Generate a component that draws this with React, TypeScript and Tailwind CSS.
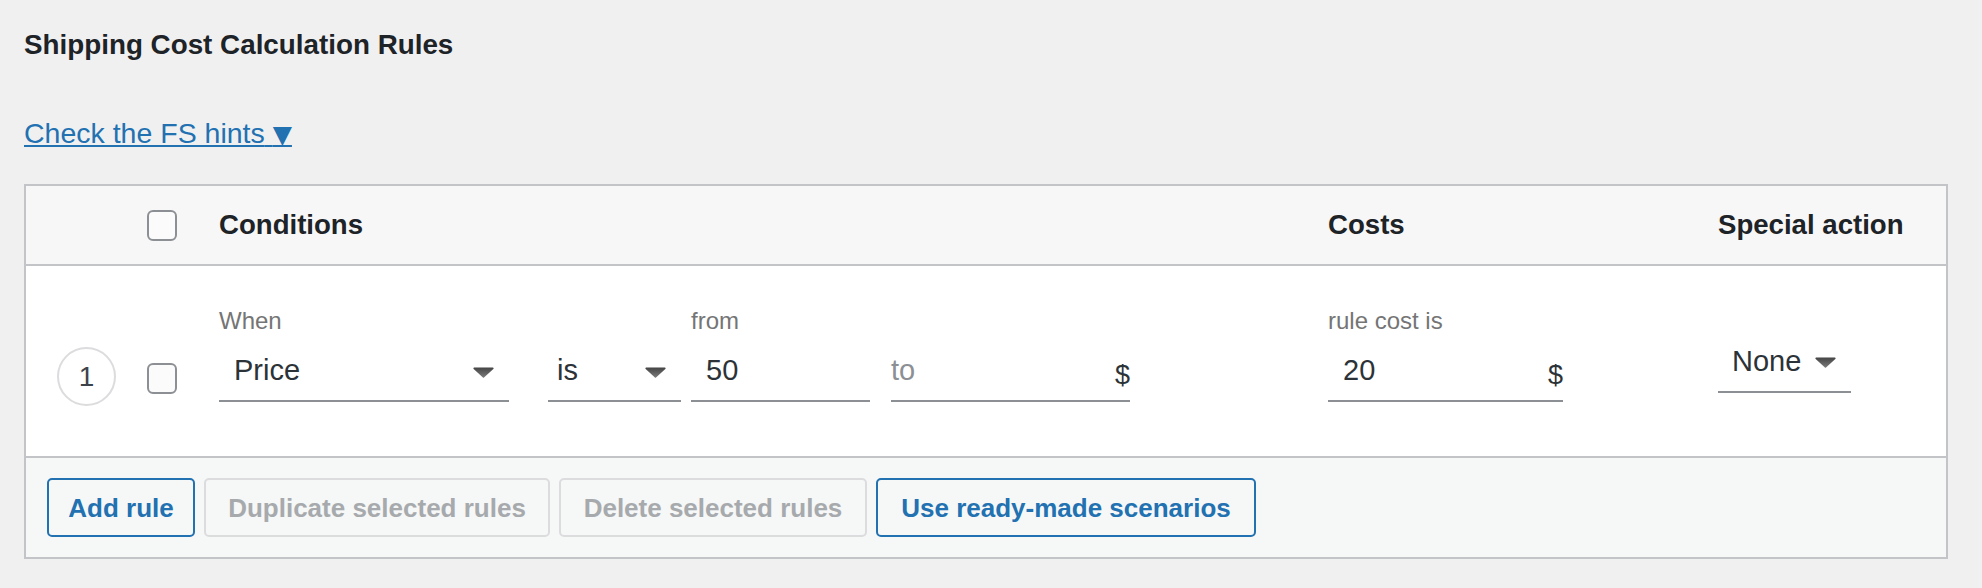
import React from "react";

const sans = "font-['Liberation_Sans',Arial,Helvetica,sans-serif]";

function Caret({ className }: { className?: string }) {
  return (
    <svg width="21" height="11" viewBox="0 0 21 11" className={className}>
      <defs>
        <linearGradient id="caretFill" x1="0" y1="0" x2="0" y2="1">
          <stop offset="0" stopColor="#444" />
          <stop offset="1" stopColor="#7c7c7c" />
        </linearGradient>
      </defs>
      <path
        d="M1.2 0.5h18.6a0.8 0.8 0 0 1 0.55 1.4L11 10.4a0.8 0.8 0 0 1-1.1 0L0.65 1.9A0.8 0.8 0 0 1 1.2 0.5z"
        fill="url(#caretFill)"
      />
    </svg>
  );
}

function Checkbox() {
  return (
    <div className="h-[31px] w-[30px] rounded-[6px] border-2 border-[#8c8f94] bg-[#fbfbfb]" />
  );
}

function Label({ children }: { children?: React.ReactNode }) {
  return (
    <div className="mb-[20px] h-[26px] text-[24px] leading-[26px] text-[#757575]">
      {children}
    </div>
  );
}

export default function App() {
  return (
    <div
      className={`${sans} h-[588px] w-full bg-[#f0f0f1] pl-[24px] pr-[34px] pt-[29px] text-[#2c3338]`}
    >
      <h2 className="text-[27.8px] font-bold leading-[32px] text-[#1d2327]">
        Shipping Cost Calculation Rules
      </h2>

      <div className="mt-[56px] h-[32px] text-[28.5px] leading-[32px]">
        <a href="#" className="text-[#2271b1] underline">
          Check the FS hints{" "}
          <span className="font-['DejaVu_Sans',sans-serif] text-[25px]">▼</span>
        </a>
      </div>

      <div className="mt-[35px] border-2 border-[#c3c4c7]">
        {/* header */}
        <div className="flex h-[80px] items-center border-b-2 border-[#c3c4c7] bg-[#f7f7f7] text-[27.6px] font-bold leading-[32px] text-[#1d2327]">
          <div className="w-[121px] shrink-0" />
          <div className="w-[72px] shrink-0">
            <Checkbox />
          </div>
          <div className="w-[1109px] shrink-0">Conditions</div>
          <div className="w-[390px] shrink-0">Costs</div>
          <div className="flex-1">Special action</div>
        </div>

        {/* rule row */}
        <div className="flex h-[192px] items-start border-b-2 border-[#c3c4c7] bg-white">
          <div className="flex w-[121px] shrink-0 justify-center pt-[81px]">
            <div className="flex h-[59px] w-[59px] items-center justify-center rounded-full border-2 border-[#dcdcde] text-[28px] text-[#3c434a]">
              1
            </div>
          </div>
          <div className="w-[72px] shrink-0 pt-[97px]">
            <Checkbox />
          </div>

          <div className="flex w-[1109px] shrink-0 items-start pt-[42px]">
            <div className="w-[290px]">
              <Label>When</Label>
              <div className="flex h-[48px] items-start justify-between border-b-2 border-[#8c8f94] pl-[15px] pr-[15px] text-[29px] leading-[32px]">
                <span>Price</span>
                <Caret className="mt-[13px]" />
              </div>
            </div>
            <div className="ml-[39px] w-[133px]">
              <Label />
              <div className="flex h-[48px] items-start justify-between border-b-2 border-[#8c8f94] pl-[9px] pr-[15px] text-[29px] leading-[32px]">
                <span>is</span>
                <Caret className="mt-[13px]" />
              </div>
            </div>
            <div className="ml-[10px] w-[179px]">
              <Label>from</Label>
              <div className="flex h-[48px] items-start border-b-2 border-[#8c8f94] pl-[15px] text-[29px] leading-[32px]">
                <span>50</span>
              </div>
            </div>
            <div className="ml-[21px] w-[239px]">
              <Label />
              <div className="flex h-[48px] items-start justify-between border-b-2 border-[#8c8f94] text-[29px] leading-[32px]">
                <span className="text-[#8c8f94]">to</span>
                <span className="pt-[5px] text-[27px]">$</span>
              </div>
            </div>
          </div>

          <div className="w-[390px] shrink-0 pt-[42px]">
            <div className="w-[235px]">
              <Label>rule cost is</Label>
              <div className="flex h-[48px] items-start justify-between border-b-2 border-[#8c8f94] pl-[15px] text-[29px] leading-[32px]">
                <span>20</span>
                <span className="pt-[5px] text-[27px]">$</span>
              </div>
            </div>
          </div>

          <div className="flex-1 pt-[79px]">
            <div className="flex h-[48px] w-[133px] items-start justify-between border-b-2 border-[#8c8f94] pl-[14px] pr-[15px] text-[29px] leading-[32px]">
              <span>None</span>
              <Caret className="mt-[12px]" />
            </div>
          </div>
        </div>

        {/* actions */}
        <div className="flex h-[99px] items-start gap-[9px] bg-[#f6f7f7] pl-[21px] pt-[20px] text-[26px] font-bold leading-[32px]">
          <button className="flex h-[59px] w-[148px] items-center justify-center rounded-[5px] border-2 border-[#2271b1] bg-[#f6f7f7] text-[#2271b1]">
            Add rule
          </button>
          <button className="flex h-[59px] w-[346px] items-center justify-center rounded-[5px] border-2 border-[#dcdcde] bg-[#f6f7f7] text-[#a7aaad]">
            Duplicate selected rules
          </button>
          <button className="flex h-[59px] w-[308px] items-center justify-center rounded-[5px] border-2 border-[#dcdcde] bg-[#f6f7f7] text-[#a7aaad]">
            Delete selected rules
          </button>
          <button className="flex h-[59px] w-[380px] items-center justify-center rounded-[5px] border-2 border-[#2271b1] bg-[#f6f7f7] text-[#2271b1]">
            Use ready-made scenarios
          </button>
        </div>
      </div>
    </div>
  );
}
